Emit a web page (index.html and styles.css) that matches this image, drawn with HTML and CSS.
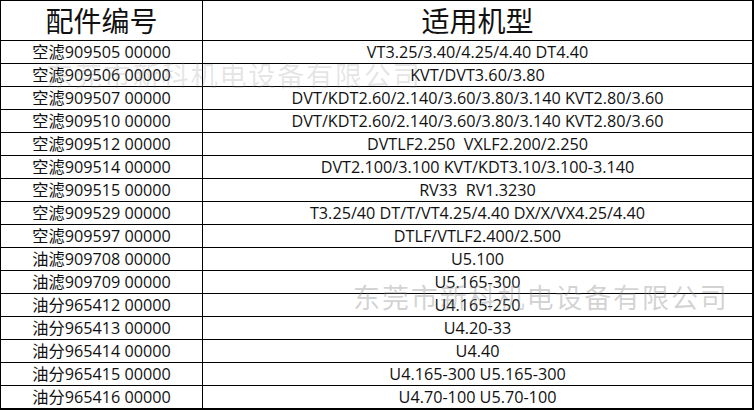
FILE: index.html
```html
<!DOCTYPE html>
<html lang="zh">
<head>
<meta charset="utf-8">
<title>配件编号</title>
<link rel="stylesheet" href="styles.css">
</head>
<body>
<div class="sheet">
  <table class="parts">
    <thead>
      <tr class="head"><th class="c1">配件编号</th><th class="c2">适用机型</th></tr>
    </thead>
    <tbody>
      <tr><td>空滤909505 00000</td><td>VT3.25/3.40/4.25/4.40 DT4.40</td></tr>
      <tr><td>空滤909506 00000</td><td>KVT/DVT3.60/3.80</td></tr>
      <tr><td>空滤909507 00000</td><td>DVT/KDT2.60/2.140/3.60/3.80/3.140 KVT2.80/3.60</td></tr>
      <tr><td>空滤909510 00000</td><td>DVT/KDT2.60/2.140/3.60/3.80/3.140 KVT2.80/3.60</td></tr>
      <tr><td>空滤909512 00000</td><td>DVTLF2.250  VXLF2.200/2.250</td></tr>
      <tr><td>空滤909514 00000</td><td>DVT2.100/3.100 KVT/KDT3.10/3.100-3.140</td></tr>
      <tr><td>空滤909515 00000</td><td>RV33  RV1.3230</td></tr>
      <tr><td>空滤909529 00000</td><td>T3.25/40 DT/T/VT4.25/4.40 DX/X/VX4.25/4.40</td></tr>
      <tr><td>空滤909597 00000</td><td>DTLF/VTLF2.400/2.500</td></tr>
      <tr><td>油滤909708 00000</td><td>U5.100</td></tr>
      <tr><td>油滤909709 00000</td><td>U5.165-300</td></tr>
      <tr><td>油分965412 00000</td><td>U4.165-250</td></tr>
      <tr><td>油分965413 00000</td><td>U4.20-33</td></tr>
      <tr><td>油分965414 00000</td><td>U4.40</td></tr>
      <tr><td>油分965415 00000</td><td>U4.165-300 U5.165-300</td></tr>
      <tr><td>油分965416 00000</td><td>U4.70-100 U5.70-100</td></tr>
    </tbody>
  </table>
  <div class="mark mark-top">东莞市新科机电设备有限公司</div>
  <div class="mark mark-bottom">东莞市新科机电设备有限公司</div>
</div>
</body>
</html>
```
FILE: styles.css
```css
html, body {
  margin: 0;
  padding: 0;
  background: #ffffff;
}
.sheet {
  position: relative;
  width: 755px;
  height: 410px;
  overflow: hidden;
}
.parts {
  border-collapse: collapse;
  width: 754px;
  table-layout: fixed;
  font-family: "Open Sans", "Noto Sans CJK SC", sans-serif;
  color: #111;
  border-right: 2px solid #000;
  border-bottom: 2px solid #000;
}
.parts th,
.parts td {
  border: 1px solid #000;
  padding: 0;
  text-align: center;
  white-space: pre;
  overflow: hidden;
}
.parts th {
  height: 39px;
  font-family: "Noto Sans CJK SC", sans-serif;
  font-weight: normal;
  font-size: 28px;
  line-height: 39px;
}
.parts td {
  height: 22px;
  font-size: 16.2px;
  line-height: 22px;
}
.parts .c1 {
  width: 201px;
}
.parts tr td:last-child,
.parts tr th:last-child {
  border-right: 2px solid #000;
}
.parts tbody tr:last-child td {
  border-bottom: 2px solid #000;
}
.mark {
  position: absolute;
  font-family: "Noto Sans CJK SC", sans-serif;
  font-size: 27px;
  letter-spacing: 1.9px;
  white-space: nowrap;
  pointer-events: none;
  line-height: 30px;
}
.mark-top {
  left: 46px;
  top: 60px;
  color: rgba(140, 140, 140, 0.22);
}
.mark-bottom {
  left: 353px;
  top: 282px;
  color: rgba(140, 140, 140, 0.38);
}
```
